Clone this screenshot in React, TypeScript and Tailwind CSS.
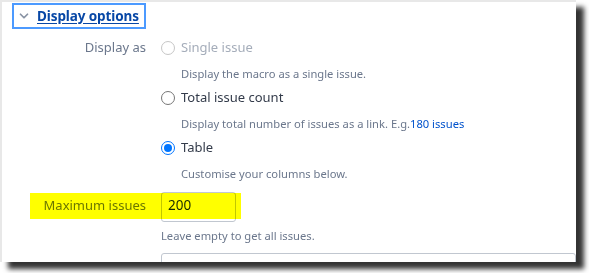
import { ChevronDown } from 'lucide-react';

const font = { fontFamily: '"Segoe UI", "Noto Sans", "Open Sans", sans-serif' };

function Radio({ checked, disabled }: { checked?: boolean; disabled?: boolean }) {
    return (
        <span
            className={`flex h-[14px] w-[14px] shrink-0 items-center justify-center rounded-full border ${
                checked ? 'border-[#0075ff]' : disabled ? 'border-[#c6c6c6]' : 'border-[#767676]'
            } bg-white`}
        >
            {checked && <span className="h-[8px] w-[8px] rounded-full bg-[#0075ff]" />}
        </span>
    );
}

function Option({
    label,
    desc,
    checked,
    disabled,
}: {
    label: string;
    desc: React.ReactNode;
    checked?: boolean;
    disabled?: boolean;
}) {
    return (
        <div>
            <div className="flex h-[24px] items-center gap-[6px]">
                <Radio checked={checked} disabled={disabled} />
                <span className={`text-[13px] ${disabled ? 'text-[#a5adba]' : 'text-[#333b4a]'}`}>{label}</span>
            </div>
            <p className="mt-[1px] h-[25px] whitespace-nowrap pl-[20px] text-[11.2px] leading-[25px] text-[#6b778c]">
                {desc}
            </p>
        </div>
    );
}

export default function App() {
    return (
        <div className="h-[273px] w-[589px] bg-white" style={font}>
            <div className="relative h-[262px] w-[576px] overflow-hidden border-l-2 border-t-2 border-[#e8e8e8] bg-white shadow-[8px_7px_5px_rgba(0,0,0,0.8)]">
                {/* Header */}
                <div className="ml-[10px] mt-[1px] flex h-[26px] w-[134px] items-center border-2 border-[#4c9aff] pl-[3px]">
                    <ChevronDown className="h-[14px] w-[14px] text-[#8993a4]" strokeWidth={3} />
                    <span className="ml-[6px] whitespace-nowrap text-[13.5px] font-bold tracking-[-0.1px] text-[#0747a6] underline underline-offset-2">
                        Display options
                    </span>
                </div>

                {/* Display as */}
                <div className="mt-[7px] grid grid-cols-[144px_1fr] gap-x-[15px]">
                    <div className="flex h-[24px] items-center justify-end text-[13px] text-[#6b778c]">Display as</div>
                    <div>
                        <Option label="Single issue" desc="Display the macro as a single issue." disabled />
                        <Option
                            label="Total issue count"
                            desc={
                                <>
                                    Display total number of issues as a link. E.g.
                                    <span className="text-[#0052cc]">180 issues</span>
                                </>
                            }
                        />
                        <Option label="Table" desc="Customise your columns below." checked />
                    </div>

                    {/* Maximum issues */}
                    <div className="mt-[6px] flex h-[30px] items-center justify-end pb-[3px] text-[13px] text-[#6b778c]">
                        Maximum issues
                    </div>
                    <div className="mt-[6px]">
                        <div className="flex h-[30px] w-[75px] items-center rounded-[3px] border border-[#c1c7d0] px-[6px] pb-[3px] text-[13.5px] text-[#172b4d]">
                            200
                        </div>
                    </div>

                    <div />
                    <p className="mt-[6px] text-[11.2px] text-[#6b778c]">Leave empty to get all issues.</p>

                    <div />
                    <div className="mt-[8px] h-[30px] rounded-[3px] border border-[#c1c7d0]" />
                </div>

                {/* highlighter mark */}
                <div className="absolute left-[28px] top-[191px] h-[26px] w-[211px] bg-[#ffff00] mix-blend-multiply" />
            </div>
        </div>
    );
}
